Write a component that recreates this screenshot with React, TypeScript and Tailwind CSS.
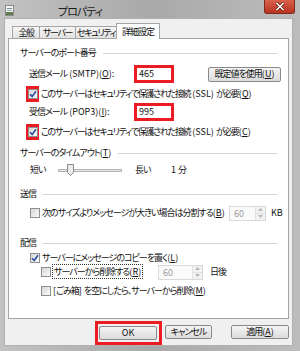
import React from 'react';

// latin runs keep normal spacing, kana are squeezed on the root
const L = ({ children }: { children: React.ReactNode }) => <span className="tracking-[0px]">{children}</span>;

// small checkbox, win7 style
const Check = ({ checked = false }: { checked?: boolean }) => (
  <span className="flex h-[10px] w-[10px] shrink-0 items-center justify-center border border-[#8e8f8f] bg-gradient-to-br from-[#d6d6d6] to-[#fbfbfb]">
    {checked && (
      <svg width="8" height="8" viewBox="0 0 8 8">
        <path d="M1 4.2 L3.2 6.4 L7 1.2" fill="none" stroke="#2a4f9e" strokeWidth="1.6" />
      </svg>
    )}
  </span>
);

const Section = ({ children, className }: { children: React.ReactNode; className: string }) => (
  <div className={`flex h-[14px] items-center pl-[11px] pr-[11px] ${className}`}>
    <span className="whitespace-nowrap">{children}</span>
    <span className="ml-[7px] h-px flex-1 bg-[#d5d5d5]" />
  </div>
);

const Spin = ({ className }: { className: string }) => (
  <div className={`flex h-[15px] border border-[#d9d9d9] bg-[#fafafa] ${className}`}>
    <span className="flex-1 pl-[4px] leading-[13px] tracking-[0px] text-[#9c9c9c]">60</span>
    <div className="flex w-[10px] flex-col border-l border-[#e2e2e2]">
      <span className="flex flex-1 items-center justify-center border-b border-[#e2e2e2] bg-[#f2f2f2]">
        <svg width="5" height="3" viewBox="0 0 5 3"><path d="M0 3 L2.5 0 L5 3Z" fill="#b8b8b8" /></svg>
      </span>
      <span className="flex flex-1 items-center justify-center bg-[#f2f2f2]">
        <svg width="5" height="3" viewBox="0 0 5 3"><path d="M0 0 L2.5 3 L5 0Z" fill="#b8b8b8" /></svg>
      </span>
    </div>
  </div>
);

const Btn = ({ children, className }: { children: React.ReactNode; className: string }) => (
  <div className={`flex h-[14px] items-center justify-center whitespace-nowrap rounded-[2px] border border-[#8a8a8a] bg-gradient-to-b from-[#f4f4f4] to-[#dcdcdc] ${className}`}>
    {children}
  </div>
);

const Tab = ({ label, className }: { label: string; className: string }) => (
  <div className={`-ml-px flex h-[12px] items-center justify-center whitespace-nowrap border border-b-0 border-[#a5a5a5] bg-gradient-to-b from-[#f5f5f5] to-[#e2e2e2] tracking-[-1.4px] ${className}`}>
    {label}
  </div>
);

export default function App() {
  return (
    <div className='flex h-[351px] w-[300px] flex-col overflow-hidden bg-gradient-to-r from-[#c2c2c2] via-[#a9a9a9] to-[#bcbcbc] font-["Noto_Sans_CJK_JP",sans-serif] text-[9px] tracking-[-1px] text-[#111] [font-feature-settings:"palt"]'>
      {/* title bar */}
      <div className="flex h-[18px] shrink-0 items-start">
        <svg className="ml-[5px] mt-[5px]" width="9" height="11" viewBox="0 0 9 11">
          <rect x="0.5" y="0.5" width="8" height="10" fill="#f4f4f4" stroke="#8a8a8a" />
          <rect x="2" y="3" width="5" height="1" fill="#7a8a9a" />
          <rect x="2" y="5" width="5" height="1" fill="#9aa" />
          <rect x="1" y="7" width="7" height="3" fill="#5f7f4f" />
        </svg>
        <span className="ml-[44px] mt-[3px] text-[11px] text-[#1a1a1a]">プロパティ</span>
        <div className="ml-auto mr-[5px] flex h-[14px] w-[31px] items-center justify-center rounded-b-[3px] border border-t-0 border-[#7e2a1e] bg-gradient-to-b from-[#d9604c] to-[#b8321f]">
          <svg width="10" height="9" viewBox="0 0 10 9">
            <path d="M1.5 1 L8.5 8 M8.5 1 L1.5 8" stroke="#5a1a10" strokeWidth="3" />
            <path d="M1.5 1 L8.5 8 M8.5 1 L1.5 8" stroke="#ffffff" strokeWidth="1.6" />
          </svg>
        </div>
      </div>

      {/* client */}
      <div className="flex flex-1 px-[4px] pb-[5px] pr-[7px]">
        <div className="flex flex-1 flex-col border border-[#b0b0b0] bg-[#f0f0f0] pl-[3px] pr-[3px] pt-[4px]">
          {/* tabs */}
          <div className="relative z-10 flex h-[15px] items-end pl-[5px]">
            <Tab label="全般" className="w-[28px]" />
            <Tab label="サーバー" className="w-[37px]" />
            <Tab label="セキュリティ" className="w-[42px]" />
            <div className="-mb-px -ml-px flex h-[16px] w-[44px] items-center justify-center whitespace-nowrap border border-b-0 border-[#a5a5a5] bg-white">
              詳細設定
            </div>
          </div>

          {/* panel */}
          <div className="flex h-[281px] flex-col border border-[#a5a5a5] bg-white">
            <Section className="mt-[7px]">サーバーのポート番号</Section>

            <div className="mt-[5px] flex h-[18px] items-center">
              <span className="ml-[20px] w-[105px] whitespace-nowrap">送信メール<L> (SMTP)(<u>O</u>):</L></span>
              <div className="flex h-[18px] w-[40px] border-[3px] border-[#ec1c24] bg-white">
                <span className="pl-[2px] leading-[12px] tracking-[0px]">465</span>
              </div>
              <Btn className="ml-[34px] h-[15px] w-[73px]">既定値を使用<L>(<u>U</u>)</L></Btn>
            </div>

            <div className="mt-[3px] flex h-[16px] items-center">
              <div className="ml-[17px] flex h-[16px] w-[13px] items-center justify-center bg-[#ec1c24]">
                <Check checked />
              </div>
              <span className="ml-[2px] whitespace-nowrap tracking-[-1.3px]">このサーバーはセキュリティで保護された接続<L> (SSL) </L>が必要<L>(<u>Q</u>)</L></span>
            </div>

            <div className="mt-[1px] flex h-[18px] items-center">
              <span className="ml-[20px] w-[105px] whitespace-nowrap">受信メール<L> (POP3)(<u>I</u>):</L></span>
              <div className="flex h-[18px] w-[40px] border-[3px] border-[#ec1c24] bg-white">
                <span className="pl-[2px] leading-[12px] tracking-[0px]">995</span>
              </div>
            </div>

            <div className="mt-[3px] flex h-[16px] items-center">
              <div className="ml-[17px] flex h-[16px] w-[13px] items-center justify-center bg-[#ec1c24]">
                <Check checked />
              </div>
              <span className="ml-[2px] whitespace-nowrap tracking-[-1.3px]">このサーバーはセキュリティで保護された接続<L> (SSL) </L>が必要<L>(<u>C</u>)</L></span>
            </div>

            <Section className="mt-[6px]">サーバーのタイムアウト<L>(<u>T</u>)</L></Section>

            <div className="mt-[2px] flex h-[16px] items-center">
              <span className="ml-[21px] w-[28px]">短い</span>
              <div className="relative flex h-[16px] w-[64px] items-center">
                <span className="h-[3px] w-full border border-[#b4b4b4] bg-[#e6e6e6]" />
                <svg className="absolute left-[9px] top-[2px]" width="7" height="12" viewBox="0 0 7 12">
                  <path d="M0.5 0.5 H6.5 V8.5 L3.5 11.5 L0.5 8.5 Z" fill="#ececec" stroke="#8a8a8a" />
                </svg>
              </div>
              <span className="ml-[13px] w-[36px]">長い</span>
              <span><L>1 </L>分</span>
            </div>

            <Section className="mt-[9px]">送信</Section>

            <div className="mt-[3px] flex h-[18px] items-center">
              <span className="ml-[21px]"><Check /></span>
              <span className="ml-[2px] w-[187px] whitespace-nowrap">次のサイズよりメッセージが大きい場合は分割する<L>(<u>B</u>)</L></span>
              <Spin className="w-[37px]" />
              <span className="ml-[5px] tracking-[0px]">KB</span>
            </div>

            <Section className="mt-[14px]">配信</Section>

            <div className="mt-[1px] flex h-[14px] items-center">
              <span className="ml-[21px]"><Check checked /></span>
              <span className="ml-[2px] whitespace-nowrap">サーバーにメッセージのコピーを置く<L>(<u>L</u>)</L></span>
            </div>

            <div className="flex h-[14px] items-center">
              <span className="ml-[32px]"><Check /></span>
              <span className="ml-[1px] w-[106px] whitespace-nowrap">
                <span className="border border-dotted border-[#333] px-[1px]">サーバーから削除する<L>(<u>R</u>)</L></span>
              </span>
              <Spin className="w-[45px]" />
              <span className="ml-[7px]">日後</span>
            </div>

            <div className="mt-[5px] flex h-[14px] items-center">
              <span className="ml-[32px]"><Check /></span>
              <span className="ml-[2px] whitespace-nowrap"><L>[</L>ごみ箱<L>] </L>を空にしたら、サーバーから削除<L>(<u>M</u>)</L></span>
            </div>
          </div>

          {/* buttons */}
          <div className="mt-[2px] flex items-start pl-[87px]">
            <div className="flex h-[24px] w-[67px] items-start border-[3px] border-[#ec1c24] pl-[1px] pt-[2px]">
              <Btn className="w-[58px] tracking-[0px]">OK</Btn>
            </div>
            <Btn className="ml-[3px] mt-[4px] w-[47px]">キャンセル</Btn>
            <Btn className="ml-[19px] mt-[4px] w-[58px]">適用<L>(<u>A</u>)</L></Btn>
          </div>
        </div>
      </div>
    </div>
  );
}
